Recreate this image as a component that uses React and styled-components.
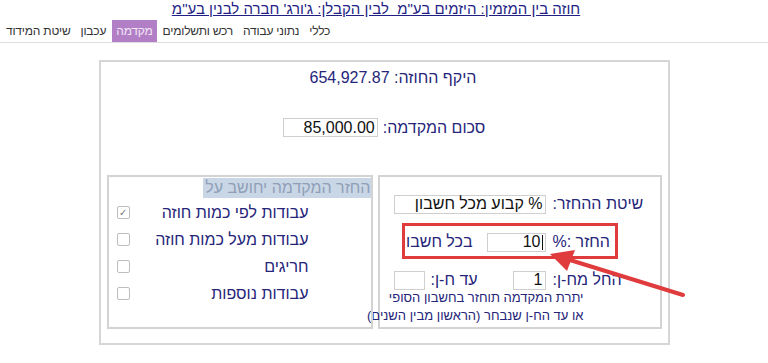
import styled, { createGlobalStyle } from "styled-components"

const GlobalStyle = createGlobalStyle`
    html, body {
        margin: 0;
        padding: 0;
        background: #fff;
    }
    body {
        font-family: "Liberation Sans", Arial, sans-serif;
    }
`

const tabs = ["כללי", "נתוני עבודה", "רכש ותשלומים", "מקדמה", "עכבון", "שיטת המידוד"]

const basisItems = [
    { label: "עבודות לפי כמות חוזה", checked: true },
    { label: "עבודות מעל כמות חוזה", checked: false },
    { label: "חריגים", checked: false },
    { label: "עבודות נוספות", checked: false },
]

export default function App() {
    return (
        <Page>
            <GlobalStyle />
            <Title>חוזה בין המזמין: היזמים בע"מ  לבין הקבלן: ג'ורג' חברה לבנין בע"מ</Title>
            <TabBar>
                {tabs.map(t => (
                    <Tab key={t} active={t === "מקדמה"}>{t}</Tab>
                ))}
            </TabBar>

            <Panel>
                <Total>היקף החוזה: 654,927.87</Total>
                <AmountRow>
                    <Label>סכום המקדמה:</Label>
                    <Field w={95}>85,000.00</Field>
                </AmountRow>

                <Columns>
                    <RefundBox>
                        <RefundGrid>
                            <Label>שיטת ההחזר:</Label>
                            <Field w={152}>% קבוע מכל חשבון</Field>

                            <Label>החזר :%</Label>
                            <Cell>
                                <Field w={59}><Caret />10</Field>
                                <Label>בכל חשבון</Label>
                            </Cell>

                            <Label>החל מח-ן:</Label>
                            <Cell spread>
                                <Field w={33}>1</Field>
                                <Cell>
                                    <Label>עד ח-ן:</Label>
                                    <Field w={31}></Field>
                                </Cell>
                            </Cell>
                        </RefundGrid>
                        <Note>
                            יתרת המקדמה תוחזר בחשבון הסופי
                            <br />
                            או עד הח-ן שנבחר (הראשון מבין השנים)
                        </Note>
                    </RefundBox>

                    <BasisBox>
                        <BasisHeader>
                            <Highlight>החזר המקדמה יחושב על</Highlight>
                        </BasisHeader>
                        {basisItems.map(item => (
                            <BasisRow key={item.label}>
                                <BasisLabel>{item.label}</BasisLabel>
                                <Check checked={item.checked}>{item.checked ? "✓" : ""}</Check>
                            </BasisRow>
                        ))}
                    </BasisBox>
                </Columns>
            </Panel>

            <Annotation viewBox="0 0 768 363" width="768" height="363">
                <rect x="403.5" y="224.5" width="213" height="33" fill="none" stroke="#e03b3d" strokeWidth="3" />
                <line x1="683" y1="295" x2="570" y2="260" stroke="#e03b3d" strokeWidth="4" strokeLinecap="round" />
                <polygon points="550,254 575,250 567,271" fill="#e03b3d" />
            </Annotation>
        </Page>
    )
}

const Page = styled.div`
    position: relative;
    width: 768px;
    height: 363px;
    overflow: hidden;
`

const Title = styled.div`
    direction: rtl;
    text-align: center;
    padding-right: 16px;
    height: 20px;
    line-height: 18px;
    font-size: 15px;
    color: #1f1f86;
    text-decoration: underline;
    white-space: pre;
`

const TabBar = styled.div`
    direction: rtl;
    display: flex;
    justify-content: flex-end;
    gap: 2px;
    height: 22px;
    padding-left: 2px;
    border-bottom: 1px solid #dedede;
`

const Tab = styled.div`
    padding: 0 4px;
    line-height: 22px;
    font-size: 12px;
    letter-spacing: -0.2px;
    color: ${p => (p.active ? "#f3e6f7" : "#333")};
    background: ${p => (p.active ? "#b27fc6" : "transparent")};
`

const Panel = styled.div`
    box-sizing: border-box;
    direction: rtl;
    width: 571px;
    margin: 17px auto 0;
    border: 2px solid #d6d6d6;
    padding: 6px 6px 14px;
    color: #25257a;
`

const Total = styled.div`
    text-align: center;
    font-size: 16px;
    line-height: 20px;
    padding-left: 18px;
`

const AmountRow = styled.div`
    display: flex;
    justify-content: center;
    align-items: center;
    gap: 5px;
    margin-top: 29px;
    height: 21px;
`

const Label = styled.span`
    font-size: 16px;
    white-space: nowrap;
`

const Field = styled.div`
    box-sizing: border-box;
    width: ${p => p.w}px;
    height: 19px;
    border: 1px solid #cfcfcf;
    padding: 0 2px;
    display: flex;
    align-items: center;
    font-size: 16px;
    color: #111;
    white-space: nowrap;
`

const Caret = styled.span`
    display: inline-block;
    width: 1px;
    height: 15px;
    background: #111;
    margin-left: 1px;
`

const Columns = styled.div`
    display: flex;
    gap: 5px;
    margin-top: 37px;
    height: 154px;
`

const Box = styled.div`
    box-sizing: border-box;
    height: 154px;
    border: 2px solid #d3d3d3;
`

const RefundBox = styled(Box)`
    width: 284px;
    padding: 17px 14px 0 0;
`

const RefundGrid = styled.div`
    display: grid;
    grid-template-columns: 93px 152px;
    column-gap: 7px;
    row-gap: 18px;
    grid-auto-rows: 20px;
    align-items: center;

    & > ${Label} {
        text-align: left;
    }
`

const Cell = styled.div`
    display: flex;
    align-items: center;
    gap: ${p => (p.spread ? "0" : "14px")};
    justify-content: ${p => (p.spread ? "space-between" : "flex-start")};

    & & {
        gap: 6px;
    }
`

const Note = styled.div`
    margin: -1px 62px 0 0;
    font-size: 13px;
    line-height: 18px;
    white-space: nowrap;
`

const BasisBox = styled(Box)`
    width: 266px;
    padding: 1px 0 0;
`

const BasisHeader = styled.div`
    display: flex;
    height: 21px;
`

const Highlight = styled.span`
    background: #c9d6e6;
    color: #8f9fb6;
    font-size: 16px;
    line-height: 20px;
    padding: 0 0 0 2px;
    height: 20px;
`

const BasisRow = styled.div`
    display: flex;
    align-items: center;
    justify-content: space-between;
    height: 27px;
    padding: 0 62px 0 8px;
`

const BasisLabel = styled.span`
    font-size: 16px;
`

const Check = styled.span`
    box-sizing: border-box;
    width: 13px;
    height: 13px;
    border: 1px solid #bdbdbd;
    border-radius: 2px;
    font-size: 10px;
    line-height: 11px;
    text-align: center;
    color: #777;
`

const Annotation = styled.svg`
    position: absolute;
    left: 0;
    top: 0;
    pointer-events: none;
`
